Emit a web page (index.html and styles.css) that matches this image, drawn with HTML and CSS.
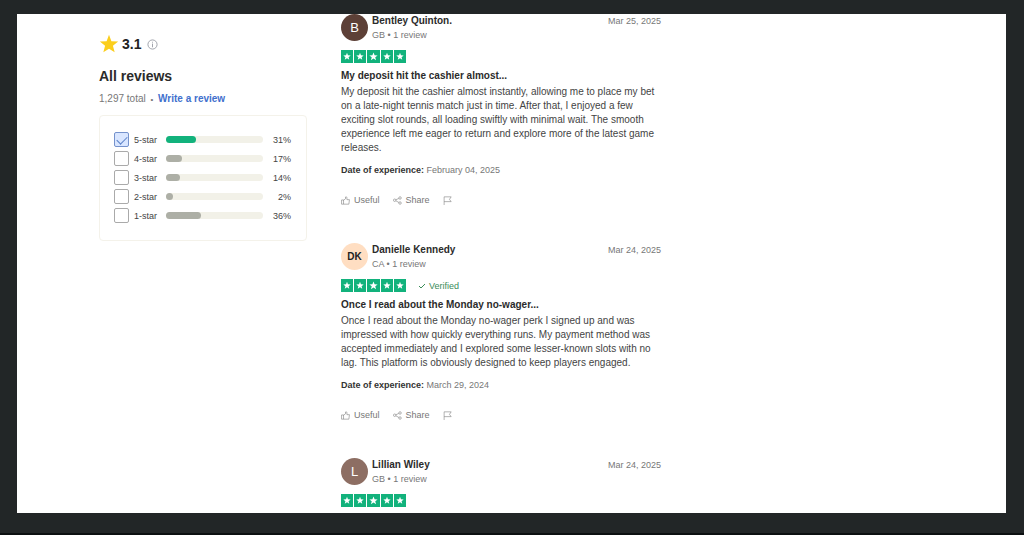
FILE: index.html
```html
<!DOCTYPE html>
<html lang="en">
<head>
    <meta charset="UTF-8">
    <meta name="viewport" content="width=device-width, initial-scale=1.0">
    <title>All reviews</title>
    <link rel="stylesheet" href="styles.css">
</head>
<body>
    <!-- shared icons -->
    <svg class="sprite" aria-hidden="true">
        <symbol id="star" viewBox="0 0 24 24">
            <path d="M12 1l2.900 7.600 8.100.4-6.300 5.100 2.100 7.900-6.800-4.400L5.200 22l2.100-7.900L1 9l8.100-.4z"/>
        </symbol>
        <symbol id="rating" viewBox="0 0 65 13">
            <path fill="#12b27c" d="M0 0h12v13H0zM13 0h12v13H13zM26 0h13v13H26zM40 0h12v13H40zM53 0h12v13H53z"/>
            <g fill="#fff">
                <use href="#star" x="2" y="2" width="8" height="9"/>
                <use href="#star" x="15" y="2" width="8" height="9"/>
                <use href="#star" x="28" y="2" width="9" height="9"/>
                <use href="#star" x="42" y="2" width="8" height="9"/>
                <use href="#star" x="55" y="2" width="8" height="9"/>
            </g>
        </symbol>
        <symbol id="thumb" viewBox="0 0 16 16">
            <path d="M1 7h3.500v7.500H1zM4.500 7.500L8 5V2c0-1 2.500-1 2.500 1v3.500H15l-1 8H4.500"/>
        </symbol>
        <symbol id="share" viewBox="0 0 16 16">
            <circle cx="3" cy="7.500" r="2.200"/>
            <circle cx="12.500" cy="3.500" r="2.200"/>
            <circle cx="12.500" cy="12.500" r="2.200"/>
            <path d="M5 6.600l5.400-2.200M5 8.500l5.500 3"/>
        </symbol>
        <symbol id="flag" viewBox="0 0 16 16">
            <path d="M2 16V1.500h12.500L11.500 6l3 4H2"/>
        </symbol>
    </svg>

    <div class="page">
        <aside class="sidebar">
            <div class="score">
                <svg class="score-star" aria-hidden="true"><use href="#star"/></svg>
                <strong>3.1</strong>
                <svg class="info" viewBox="0 0 12 12" aria-hidden="true">
                    <circle cx="6" cy="6" r="5"/>
                    <path d="M6 5v4M6 3v1"/>
                </svg>
            </div>
            <h2>All reviews</h2>
            <p class="total">1,297 total <span class="dot">•</span> <a href="#write">Write a review</a></p>

            <div class="filters">
                <div class="filter">
                    <input type="checkbox" id="star5" checked>
                    <label for="star5">5-star</label>
                    <div class="bar"><div class="fill green" style="width: 31%"></div></div>
                    <span class="percent">31%</span>
                </div>
                <div class="filter">
                    <input type="checkbox" id="star4">
                    <label for="star4">4-star</label>
                    <div class="bar"><div class="fill" style="width: 17%"></div></div>
                    <span class="percent">17%</span>
                </div>
                <div class="filter">
                    <input type="checkbox" id="star3">
                    <label for="star3">3-star</label>
                    <div class="bar"><div class="fill" style="width: 14%"></div></div>
                    <span class="percent">14%</span>
                </div>
                <div class="filter">
                    <input type="checkbox" id="star2">
                    <label for="star2">2-star</label>
                    <div class="bar"><div class="fill" style="width: 2%"></div></div>
                    <span class="percent">2%</span>
                </div>
                <div class="filter">
                    <input type="checkbox" id="star1">
                    <label for="star1">1-star</label>
                    <div class="bar"><div class="fill" style="width: 36%"></div></div>
                    <span class="percent">36%</span>
                </div>
            </div>
        </aside>

        <main class="reviews">
            <article class="review">
                <header>
                    <span class="avatar brown">B</span>
                    <div class="author">
                        <strong>Bentley Quinton.</strong>
                        <span>GB • 1 review</span>
                    </div>
                    <time>Mar 25, 2025</time>
                </header>
                <div class="rating">
                    <svg class="stars" role="img" aria-label="5 stars"><use href="#rating"/></svg>
                </div>
                <h3>My deposit hit the cashier almost...</h3>
                <p class="text">My deposit hit the cashier almost instantly, allowing me to place my bet on a late-night tennis match just in time. After that, I enjoyed a few exciting slot rounds, all loading swiftly with minimal wait. The smooth experience left me eager to return and explore more of the latest game releases.</p>
                <p class="experience"><b>Date of experience:</b> February 04, 2025</p>
                <div class="actions">
                    <button type="button"><svg class="icon" aria-hidden="true"><use href="#thumb"/></svg>Useful</button>
                    <button type="button"><svg class="icon" aria-hidden="true"><use href="#share"/></svg>Share</button>
                    <button type="button" aria-label="Report"><svg class="icon" aria-hidden="true"><use href="#flag"/></svg></button>
                </div>
            </article>

            <article class="review">
                <header>
                    <span class="avatar peach">DK</span>
                    <div class="author">
                        <strong>Danielle Kennedy</strong>
                        <span>CA • 1 review</span>
                    </div>
                    <time>Mar 24, 2025</time>
                </header>
                <div class="rating">
                    <svg class="stars" role="img" aria-label="5 stars"><use href="#rating"/></svg>
                    <span class="verified">
                        <svg viewBox="0 0 8 8" aria-hidden="true"><path d="M1 4l2 2 4-4"/></svg>Verified
                    </span>
                </div>
                <h3>Once I read about the Monday no-wager...</h3>
                <p class="text">Once I read about the Monday no-wager perk I signed up and was impressed with how quickly everything runs. My payment method was accepted immediately and I explored some lesser-known slots with no lag. This platform is obviously designed to keep players engaged.</p>
                <p class="experience"><b>Date of experience:</b> March 29, 2024</p>
                <div class="actions">
                    <button type="button"><svg class="icon" aria-hidden="true"><use href="#thumb"/></svg>Useful</button>
                    <button type="button"><svg class="icon" aria-hidden="true"><use href="#share"/></svg>Share</button>
                    <button type="button" aria-label="Report"><svg class="icon" aria-hidden="true"><use href="#flag"/></svg></button>
                </div>
            </article>

            <article class="review">
                <header>
                    <span class="avatar taupe">L</span>
                    <div class="author">
                        <strong>Lillian Wiley</strong>
                        <span>GB • 1 review</span>
                    </div>
                    <time>Mar 24, 2025</time>
                </header>
                <div class="rating">
                    <svg class="stars" role="img" aria-label="5 stars"><use href="#rating"/></svg>
                </div>
            </article>
        </main>
    </div>
</body>
</html>
```
FILE: styles.css
```css
* {
    box-sizing: border-box;
}
body {
    margin: 0;
    height: 100vh;
    padding: 14px 18px 20px 17px;
    border-bottom: 2px solid #0c1011;
    background-color: #222627;
    font-family: "Liberation Sans", Arial, sans-serif;
    font-size: 10px;
    line-height: 14px;
    color: #444;
}
h2, h3, p {
    margin: 0;
}
svg {
    flex: none;
}
.sprite {
    display: none;
}
.page {
    display: flex;
    gap: 34px;
    height: 100%;
    padding: 0 82px;
    overflow: hidden;
    background-color: #fff;
}

/* sidebar */
.sidebar {
    flex: 0 0 208px;
    padding-top: 20px;
}
.score {
    display: flex;
    align-items: center;
    height: 20px;
    color: #222;
}
.score strong {
    margin: 0 6px 0 3px;
    font-size: 14px;
}
.score-star {
    width: 20px;
    height: 20px;
    fill: #fbce1d;
}
.info {
    width: 11px;
    height: 11px;
    fill: none;
    stroke: #999da5;
}
h2 {
    margin-top: 13px;
    font-size: 14px;
    line-height: 18px;
    color: #2b2b2b;
}
.total {
    margin-top: 7px;
    color: #777;
}
.total .dot {
    margin: 0 2px;
    font-size: 8px;
}
.total a {
    color: #4170cd;
    font-weight: bold;
    text-decoration: none;
}
.filters {
    display: grid;
    gap: 4px;
    margin-top: 8px;
    padding: 16px 15px 17px 14px;
    border: 1px solid #f4f2ea;
    border-radius: 4px;
}
.filter {
    display: flex;
    align-items: center;
    height: 15px;
    font-size: 9px;
}
.filter input {
    appearance: none;
    width: 15px;
    height: 15px;
    margin: 0 5px 0 0;
    border: 1px solid #aaa;
    border-radius: 2px;
    background-color: #fff;
}
.filter input:checked {
    display: flex;
    justify-content: center;
    padding-top: 3px;
    border-color: #7592cc;
    background-color: #d9e6ff;
}
.filter input:checked::before {
    content: "";
    width: 9px;
    height: 5px;
    border: solid #5c82c8;
    border-width: 0 0 1px 1px;
    transform: rotate(-45deg);
}
.filter label {
    width: 32px;
}
.bar {
    flex: 1;
    height: 7px;
    border-radius: 4px;
    background-color: #f2f1e8;
}
.fill {
    min-width: 7px;
    height: 7px;
    border-radius: 4px;
    background-color: #adafa6;
}
.fill.green {
    background-color: #12b27c;
}
.percent {
    width: 28px;
    text-align: right;
}

/* reviews */
.reviews {
    flex: 0 1 320px;
}
.review {
    margin-bottom: 36px;
}
.review header {
    display: flex;
    height: 28px;
}
.avatar {
    width: 27px;
    height: 27px;
    border-radius: 50%;
    line-height: 28px;
    text-align: center;
}
.brown {
    background-color: #5d4037;
    color: #fff;
    font-size: 13px;
}
.peach {
    background-color: #ffdec2;
    color: #222;
    font-weight: bold;
}
.taupe {
    background-color: #8d6e63;
    color: #fff;
    font-size: 13px;
}
.author {
    flex: 1;
    margin-left: 4px;
}
.author strong {
    display: block;
    color: #2b2b2b;
}
.author span, time {
    font-size: 9px;
    color: #777;
}
.rating {
    display: flex;
    align-items: center;
    gap: 12px;
    height: 13px;
    margin-top: 8px;
}
.stars {
    width: 65px;
    height: 13px;
}
.verified {
    display: flex;
    align-items: center;
    gap: 3px;
    font-size: 9px;
    color: #3b8c5a;
}
.verified svg {
    width: 8px;
    height: 8px;
    fill: none;
    stroke: #3b8c5a;
}
h3 {
    margin-top: 6px;
    font-size: 10px;
    color: #2b2b2b;
}
.text {
    margin-top: 2px;
}
.experience {
    margin-top: 8px;
    font-size: 9px;
    color: #777;
}
.experience b {
    color: #333;
}
.actions {
    display: flex;
    gap: 13px;
    margin-top: 16px;
}
.actions button {
    display: flex;
    align-items: center;
    gap: 4px;
    padding: 0;
    border: none;
    background: none;
    font: inherit;
    font-size: 9px;
    line-height: 14px;
    color: #777;
    cursor: pointer;
}
.icon {
    width: 9px;
    height: 9px;
    fill: none;
    stroke: #777;
    stroke-width: 1px;
}
```
